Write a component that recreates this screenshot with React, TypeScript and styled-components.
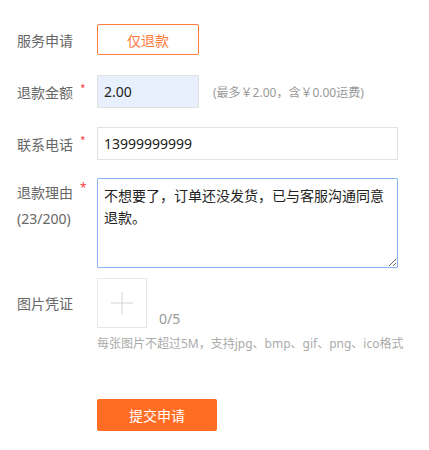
import React, {useEffect, useRef} from 'react'
import styled, {createGlobalStyle} from 'styled-components'

const GlobalStyle = createGlobalStyle`
	html, body {
		margin: 0;
		padding: 0;
		background: #fff;
	}
	body {
		font-family: 'Noto Sans', 'Noto Sans CJK SC', sans-serif;
		font-size: 14px;
		color: #333;
	}
`

const reason = '不想要了，订单还没发货，已与客服沟通同意退款。'

export default function App() {
	const reasonRef = useRef<HTMLTextAreaElement>(null)

	useEffect(() => {
		// keep the caret at the end of the reason, like the user just typed it
		const el = reasonRef.current
		if (!el) return
		el.focus()
		el.setSelectionRange(el.value.length, el.value.length)
	}, [])

	return (
		<>
			<GlobalStyle />
			<Form>
				<Row $top={24} $align='center'>
					<Label>服务申请</Label>
					<TypeButton type='button'>仅退款</TypeButton>
				</Row>

				<Row $top={20} $align='center'>
					<Label>
						退款金额<Star>*</Star>
					</Label>
					<Inline>
						<Input $width={102} $filled defaultValue='2.00' />
						<Hint>(最多￥2.00，含￥0.00运费)</Hint>
					</Inline>
				</Row>

				<Row $top={19} $align='center'>
					<Label>
						联系电话<Star>*</Star>
					</Label>
					<Input $width={301} defaultValue='13999999999' />
				</Row>

				<Row $top={18} $align='start'>
					<ReasonLabel>
						<div>
							退款理由<Star $top={-6}>*</Star>
						</div>
						<div>({reason.length}/200)</div>
					</ReasonLabel>
					<TextArea ref={reasonRef} defaultValue={reason} />
				</Row>

				<Row $top={10} $align='center'>
					<Label>图片凭证</Label>
					<Inline $bottom>
						<UploadBox type='button' aria-label='上传图片'>
							<svg width='22' height='22' viewBox='0 0 22 22'>
								<path d='M11 0v22M0 11h22' stroke='#d4d4d4' strokeWidth='1' />
							</svg>
						</UploadBox>
						<Count>0/5</Count>
					</Inline>
				</Row>

				<UploadTip>每张图片不超过5M，支持jpg、bmp、gif、png、ico格式</UploadTip>

				<SubmitButton type='button'>提交申请</SubmitButton>
			</Form>
		</>
	)
}

const Form = styled.form`
	display: flex;
	flex-direction: column;
	padding-left: 17px;
	padding-bottom: 20px;
`

const Row = styled.div<{$top: number; $align: 'center' | 'start'}>`
	display: grid;
	grid-template-columns: 80px auto;
	align-items: ${p => p.$align};
	margin-top: ${p => p.$top}px;
`

const Label = styled.div`
	display: flex;
	align-items: center;
	color: #666;
	font-size: 14px;
	line-height: 20px;
	font-family: 'Noto Sans CJK SC', sans-serif;
`

const ReasonLabel = styled.div`
	color: #666;
	font-size: 14px;
	line-height: 25px;
	padding-top: 2px;
	font-family: 'Noto Sans', 'Noto Sans CJK SC', sans-serif;
`

const Star = styled.span<{$top?: number}>`
	color: #f44;
	font-size: 12px;
	margin-left: 7px;
	position: relative;
	top: ${p => p.$top ?? -3}px;
`

const TypeButton = styled.button`
	width: 102px;
	height: 31px;
	box-sizing: border-box;
	border: 1px solid #ff7b3d;
	border-radius: 2px;
	background: #fff;
	color: #ff7b3d;
	font-size: 14px;
	font-family: 'Noto Sans CJK SC', sans-serif;
	padding: 0;
	cursor: pointer;
`

const Inline = styled.div<{$bottom?: boolean}>`
	display: flex;
	align-items: ${p => (p.$bottom ? 'flex-end' : 'center')};
`

const Input = styled.input<{$width: number; $filled?: boolean}>`
	width: ${p => p.$width}px;
	height: 33px;
	box-sizing: border-box;
	border: 1px solid #e2e2e2;
	background: ${p => (p.$filled ? '#e8f0fe' : '#fff')};
	padding: 0 6px;
	font-size: 14px;
	color: #222;
	font-family: 'Noto Sans', 'Noto Sans CJK SC', sans-serif;
	outline: none;
`

const Hint = styled.span`
	margin-left: 14px;
	font-size: 12px;
	color: #999;
	font-family: 'Noto Sans', 'Noto Sans CJK SC', sans-serif;
`

const TextArea = styled.textarea`
	width: 301px;
	height: 90px;
	box-sizing: border-box;
	border: 1px solid #8ab4f8;
	border-radius: 1px;
	padding: 5px 6px;
	font-size: 14px;
	line-height: 22px;
	color: #222;
	caret-color: #222;
	font-family: 'Noto Sans CJK SC', sans-serif;
	outline: none;
	resize: both;
`

const UploadBox = styled.button`
	width: 50px;
	height: 50px;
	box-sizing: border-box;
	border: 1px solid #e6e6e6;
	background: #fff;
	padding: 0;
	display: flex;
	align-items: center;
	justify-content: center;
	cursor: pointer;
`

const Count = styled.span`
	margin-left: 12px;
	color: #999;
	font-size: 14px;
	line-height: 18px;
	font-family: 'Noto Sans', sans-serif;
`

const UploadTip = styled.div`
	margin: 7px 0 0 80px;
	font-size: 12px;
	line-height: 18px;
	color: #aaa;
	font-family: 'Noto Sans', 'Noto Sans CJK SC', sans-serif;
`

const SubmitButton = styled.button`
	margin: 46px 0 0 80px;
	width: 120px;
	height: 32px;
	border: none;
	border-radius: 2px;
	background: #ff6d24;
	color: #fff;
	font-size: 14px;
	font-family: 'Noto Sans CJK SC', sans-serif;
	cursor: pointer;
`
